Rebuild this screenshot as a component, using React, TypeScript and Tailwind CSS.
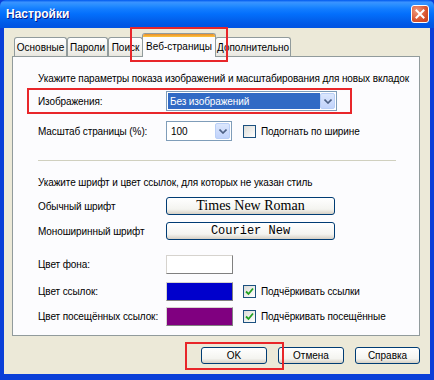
import React from "react";

const font = { fontFamily: '"Liberation Sans", Arial, sans-serif' };

function Tab({ label, selected, w }: { label: string; selected?: boolean; w: number }) {
  if (selected) {
    return (
      <div
        className="relative h-[24px] -mx-[1px] z-10 flex items-center justify-center border border-b-0 border-[#919B9C] rounded-t-[3px] bg-[#FCFCFE] overflow-hidden"
        style={{ width: w }}
      >
        <div className="absolute top-0 left-0 right-0 h-[3px] bg-[linear-gradient(to_bottom,#E68B2C,#FFC73C)]" />
        <span className="text-[10px] whitespace-nowrap text-black pt-[1px]">{label}</span>
      </div>
    );
  }
  return (
    <div
      className="h-[20px] flex items-center justify-center border border-b-0 border-[#919B9C] rounded-t-[3px] bg-[linear-gradient(to_bottom,#FFFFFF,#F3F3EF_60%,#E6E4DC)]"
      style={{ width: w }}
    >
      <span className="text-[10px] whitespace-nowrap text-black">{label}</span>
    </div>
  );
}

function Arrow() {
  return (
    <div className="w-[15px] h-full border border-[#B9CFF7] rounded-[2px] bg-[linear-gradient(to_bottom,#DCE7FD,#C1D3FB)] flex items-center justify-center">
      <svg width="8" height="5" viewBox="0 0 8 5">
        <path d="M0.5 0.5 L4 4 L7.5 0.5" stroke="#4D6185" strokeWidth="1.6" fill="none" />
      </svg>
    </div>
  );
}

function Checkbox({ checked }: { checked?: boolean }) {
  return (
    <div className="w-[13px] h-[13px] shrink-0 border border-[#1C5180] bg-[linear-gradient(135deg,#DCDCD7,#FFFFFF)] flex items-center justify-center">
      {checked && (
        <svg width="9" height="9" viewBox="0 0 9 9">
          <path d="M1 4.5 L3.5 7 L8 1.5" stroke="#21A121" strokeWidth="1.8" fill="none" />
        </svg>
      )}
    </div>
  );
}

function XPButton({ children, w, className = "" }: { children: React.ReactNode; w: number; className?: string }) {
  return (
    <div
      className={`h-[17px] flex items-center justify-center border border-[#003C74] rounded-[3px] bg-[linear-gradient(to_bottom,#FFFFFF,#F4F4F0_70%,#D6D0C5)] whitespace-nowrap ${className}`}
      style={{ width: w }}
    >
      {children}
    </div>
  );
}

export default function App() {
  return (
    <div className="w-[434px] h-[380px] relative overflow-hidden text-black" style={font}>
      <div className="w-full h-full flex flex-col bg-[#0A3FD8] px-[4px] pb-[6px]">
        {/* Title bar */}
        <div className="h-[28px] -mx-[4px] px-[6px] flex items-center justify-between rounded-t-[6px] bg-[linear-gradient(to_bottom,#0058EE_0%,#3A93FF_8%,#288EFF_18%,#127DFF_32%,#036FFC_50%,#0262EE_70%,#0057E5_88%,#0054E3_100%)]">
          <span className="text-white font-bold text-[12px] [text-shadow:1px_1px_0_#0A1883]">
            Настройки
          </span>
          <div className="w-[18px] h-[18px] mr-[-1px] rounded-[3px] border border-white bg-[radial-gradient(circle_at_30%_30%,#F09A7C,#D8532F_60%,#C4401D)] flex items-center justify-center">
            <svg width="10" height="10" viewBox="0 0 10 10">
              <path d="M1.5 1.5 L8.5 8.5 M8.5 1.5 L1.5 8.5" stroke="white" strokeWidth="2" strokeLinecap="square" />
            </svg>
          </div>
        </div>

        {/* Client area */}
        <div className="flex-1 bg-[#ECE9D8] flex flex-col pl-[8px] pr-[10px] pt-[5px]">
          {/* Tabs */}
          <div className="flex items-end pl-[2px] h-[24px]">
            <Tab label="Основные" w={53} />
            <Tab label="Пароли" w={41} />
            <Tab label="Поиск" w={35} />
            <Tab label="Веб-страницы" w={74} selected />
            <Tab label="Дополнительно" w={76} />
          </div>

          {/* Panel */}
          <div className="h-[280px] -mt-[1px] border border-[#919B9C] bg-[#FCFCFE] flex flex-col pl-[25px] pr-[10px] text-[10px] tracking-[-0.1px] whitespace-nowrap">
            <div className="h-[14px] mt-[14px] flex items-center">
              Укажите параметры показа изображений и масштабирования для новых вкладок
            </div>

            <div className="flex items-center mt-[6px] h-[20px]">
              <div className="w-[128px]">Изображения:</div>
              <div className="w-[171px] h-[20px] border border-[#7F9DB9] bg-white flex p-[1px]">
                <div className="flex-1 bg-[#316AC5] text-white flex items-center pl-[2px]">Без изображений</div>
                <Arrow />
              </div>
            </div>

            <div className="flex items-center mt-[10px] h-[20px]">
              <div className="w-[128px]">Масштаб страницы (%):</div>
              <div className="w-[66px] h-[20px] border border-[#7F9DB9] bg-white flex p-[1px]">
                <div className="flex-1 flex items-center pl-[3px]">100</div>
                <Arrow />
              </div>
              <div className="ml-[11px] flex items-center gap-[5px]">
                <Checkbox />
                <span>Подогнать по ширине</span>
              </div>
            </div>

            <div className="mt-[19px] h-[1px] bg-[#D0D0BF] w-[358px]" />

            <div className="h-[14px] mt-[14px] flex items-center">
              Укажите шрифт и цвет ссылок, для которых не указан стиль
            </div>

            <div className="flex items-center mt-[8px] h-[18px]">
              <div className="w-[128px]">Обычный шрифт</div>
              <XPButton w={169} className="h-[18px] tracking-normal">
                <span className="text-[14px] leading-none" style={{ fontFamily: '"Liberation Serif", "Times New Roman", serif' }}>
                  Times New Roman
                </span>
              </XPButton>
            </div>

            <div className="flex items-center mt-[7px] h-[18px]">
              <div className="w-[128px]">Моноширинный шрифт</div>
              <XPButton w={169} className="h-[18px] tracking-normal">
                <span className="text-[12px] leading-none" style={{ fontFamily: '"Liberation Mono", "Courier New", monospace' }}>
                  Courier New
                </span>
              </XPButton>
            </div>

            <div className="flex items-center mt-[15px] h-[19px]">
              <div className="w-[128px]">Цвет фона:</div>
              <div className="w-[67px] h-[19px] bg-white border border-[#D6D3CE] border-r-[#808080] border-b-[#808080]" />
            </div>

            <div className="flex items-center mt-[8px] h-[19px]">
              <div className="w-[128px]">Цвет ссылок:</div>
              <div className="w-[67px] h-[19px] bg-[#0000CC] border border-[#D6D3CE] border-r-[#808080] border-b-[#808080]" />
              <div className="ml-[10px] flex items-center gap-[5px]">
                <Checkbox checked />
                <span>Подчёркивать ссылки</span>
              </div>
            </div>

            <div className="flex items-center mt-[6px] h-[19px]">
              <div className="w-[128px]">Цвет посещённых ссылок:</div>
              <div className="w-[67px] h-[19px] bg-[#800080] border border-[#D6D3CE] border-r-[#808080] border-b-[#808080]" />
              <div className="ml-[10px] flex items-center gap-[5px]">
                <Checkbox checked />
                <span>Подчёркивать посещённые</span>
              </div>
            </div>
          </div>

          {/* Buttons */}
          <div className="flex justify-end gap-[11px] mt-[11px] text-[10px]">
            <XPButton w={66}>OK</XPButton>
            <XPButton w={66}>Отмена</XPButton>
            <XPButton w={65}>Справка</XPButton>
          </div>
        </div>
      </div>

      {/* Red highlight boxes */}
      <div className="absolute left-[130px] top-[27px] w-[98px] h-[35px] border-2 border-[#E8262A] pointer-events-none z-20" />
      <div className="absolute left-[27px] top-[88px] w-[325px] h-[26px] border-2 border-[#E8262A] pointer-events-none z-20" />
      <div className="absolute left-[185px] top-[342px] w-[99px] h-[28px] border-2 border-[#E8262A] pointer-events-none z-20" />
    </div>
  );
}
